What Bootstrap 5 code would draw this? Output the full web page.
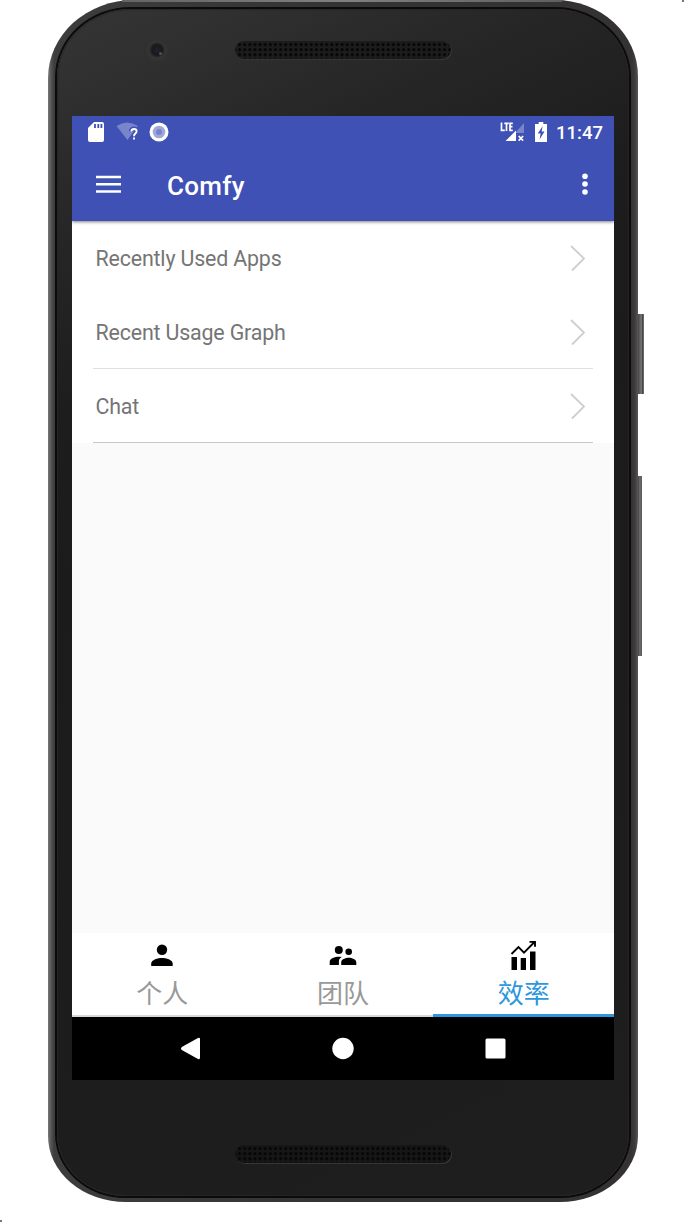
<!DOCTYPE html>
<html lang="zh-CN">
<head>
<meta charset="utf-8">
<meta name="viewport" content="width=device-width, initial-scale=1">
<title>Comfy</title>
<link href="https://cdn.jsdelivr.net/npm/bootstrap@5.3.0/dist/css/bootstrap.min.css" rel="stylesheet">
<style>
body{font-family:Roboto,"Noto Sans CJK SC",sans-serif;width:684px;height:1222px;overflow:hidden;background:#fff}
svg{display:block;flex:none}
.phone{width:590px;height:1202px;margin-left:48px;padding:9px 9px 6px 9px;border-radius:86px 83px 78px 78px/78px 76px 66px 66px;background:linear-gradient(90deg,#777 0,#555 3px,#3e3d3e 6px,#343233 50%,#343233 583px,#3e3b3c 587px,#5a5758 590px)}
.phone::before{content:"";position:absolute;left:122px;top:0;width:440px;height:2px;background:linear-gradient(90deg,#646464,#808080 50%,#606060)}
.face{width:572px;height:1187px;border-radius:74px 74px 68px 68px/68px 68px 62px 62px;padding:0 15px;background:linear-gradient(155deg,#353536 0,#2f2f2f 7%,#262626 16%,#1d1d1d 28%,#1b1b1b 40%,#1e1e1e 100%);box-shadow:0 0 0 2px #0b0b0b,inset 0 0 1px 1px #262626}
.brow{height:107px;padding-left:74px}
.lens{width:22px;height:22px;background:radial-gradient(circle at 11px 10px,#242129 0,#19181d 5px,#2a2a2a 7px,#353535 8px,#313131 11px);margin-top:31px}
.lens i{display:block;width:3px;height:3px;background:#654c4e;border-radius:50%;margin:12px 0 0 13px}
.grille{width:216px;height:18px;border-radius:9px;background:radial-gradient(circle,#050505 1.1px,transparent 1.9px) 2px 1px/5.13px 5.1px,#1c1c1c;box-shadow:1px 1px 0 #363636}
.brow .grille{margin:32px 0 0 67px}
.chin{height:116px}
.chin .grille{margin:65px 0 0 163px;background-color:#161616}
.sidekey{position:absolute;left:638px;background:linear-gradient(90deg,#444,#777 55%,#484848 75%,#777)}
.key-power{top:314px;width:6px;height:80px}
.key-volume{top:476px;width:4px;height:180px}
.fleck{position:absolute;width:2px;height:2px;background:#777}
.screen{width:542px;height:964px;background:#fafafa}
.topbars{height:105px;background:#3f51b5;color:#fff;box-shadow:0 1px 3px rgba(0,0,0,.5);clip-path:inset(0 0 -6px 0);position:relative}
.status{height:32px;padding:0 11px 0 16px}
.clock{font-size:18.500px;font-weight:500;line-height:32px;margin:1px 0 0 9px}
.appbar{height:73px;padding:0 25px 2px 24px}
.apptitle{font-size:26px;font-weight:500;line-height:1;margin:4px 0 0 46px;letter-spacing:.3px}
.entry{height:74px;padding:0 28px 0 24px;color:#757575;font-size:21.400px;background:#fff}
.entry .label{margin-top:3px;margin-left:-.5px;letter-spacing:-.17px}
.rule{position:relative}
.rule::after{content:"";position:absolute;left:21px;right:21px;bottom:0;height:1px;background:#e0e0e0}
.rule-end::after{background:#c8c8c8}
.tabs{height:84px;background:#fff}
.tab{color:#999;font-size:26px;border-bottom:2px solid #d8d8d8;padding-top:8px;font-family:"Noto Sans CJK SC",sans-serif;font-weight:400}
.tab span{line-height:36px;margin-top:1px}
.tab.on{color:#2c97de;border-bottom:3px solid #2c97de}
.softkeys{height:63px;background:#000}
</style>
</head>
<body>
<div class="phone">
 <div class="face">
  <div class="brow d-flex align-items-start"><div class="lens rounded-circle d-flex align-items-start"><i></i></div><div class="grille"></div></div>
  <main class="screen d-flex flex-column">
   <header class="topbars">
    <div class="status d-flex align-items-center">
     <svg width="16" height="20" viewBox="0 0 16 20"><path fill="#fff" d="M6 0h8q2 0 2 2v16q0 2-2 2H2q-2 0-2-2V6z"/><path d="M7 2v4M10.300 2v4M13.400 2v4" stroke="#3f51b5" stroke-width="1.800"/></svg>
     <svg class="ms-2" width="32" height="22" viewBox="0 0 32 22" style="margin-right:2px"><path fill="#7985cb" d="M4.500 5Q15 -2 26 5l-4 5-6.500 9z"/><path d="M18.800 10.500q.3-3 3.100-3 3 0 3 2.700 0 1.600-1.500 2.600-1.400 1-1.400 2.700" fill="none" stroke="#3f51b5" stroke-width="4"/><path d="M19.300 10.500q.2-2.500 2.700-2.500 2.600 0 2.600 2.300 0 1.300-1.300 2.300-1.300.9-1.300 2.600M22 16.500v2" fill="none" stroke="#fff" stroke-width="1.900"/></svg>
     <svg width="20" height="20" viewBox="0 0 20 20" style="margin-left:3px"><circle cx="10" cy="10" r="9.500" fill="#fff"/><circle cx="10" cy="10" r="6.300" fill="#9fa8da"/><circle cx="10" cy="10" r="3" fill="#7985cb"/></svg>
     <svg class="ms-auto" width="25" height="22" viewBox="0 0 25 22"><path fill="#7985cb" d="M24 2v10h-9z"/><path fill="#fff" d="M5.500 20 16 9.500V20z"/><path d="M1.500 1.500v7.800H4.800M4.300 2.300h4.400M6.500 2v8M12.800 2.300H10v7h2.800M10 5.700h2.500" fill="none" stroke="#fff" stroke-width="1.700"/><path fill="#3f51b5" d="M16 13h8v7h-8z"/><path d="m18.700 15 4.400 4.600m0-4.600-4.400 4.600" stroke="#fff" stroke-width="1.700"/></svg>
     <svg width="12" height="20" viewBox="0 0 13 20" preserveAspectRatio="none" style="margin-left:10px"><path fill="#fff" d="M4 0h5v2h4v18H0V2h4z"/><path d="M8.300 4 3 11.500h3.100L5 17.500 10.300 9.500H7.200z" fill="#3f51b5"/></svg>
     <span class="clock">11:47</span>
    </div>
    <div class="appbar d-flex align-items-center">
     <svg width="25" height="18" viewBox="0 0 25 18"><path d="M0 2h25M0 9.300h25M0 16.500h25" stroke="#fff" stroke-width="2.500"/></svg>
     <span class="apptitle">Comfy</span>
     <svg class="ms-auto" width="8" height="22" viewBox="0 0 8 22"><g fill="#fff"><circle cx="4" cy="3.200" r="2.800"/><circle cx="4" cy="11" r="2.800"/><circle cx="4" cy="19" r="2.800"/></g></svg>
    </div>
   </header>
   <section class="flex-grow-1">
    <div class="entry d-flex align-items-center justify-content-between"><span class="label">Recently Used Apps</span><svg width="16" height="28" viewBox="0 0 16 28"><path d="m1 2 13 12.500-12 12" fill="none" stroke="#cecece" stroke-width="1.800"/></svg></div>
    <div class="entry rule d-flex align-items-center justify-content-between"><span class="label">Recent Usage Graph</span><svg width="16" height="28" viewBox="0 0 16 28"><path d="m1 2 13 12.500-12 12" fill="none" stroke="#cecece" stroke-width="1.800"/></svg></div>
    <div class="entry rule rule-end d-flex align-items-center justify-content-between"><span class="label">Chat</span><svg width="16" height="28" viewBox="0 0 16 28"><path d="m1 2 13 12.500-12 12" fill="none" stroke="#cecece" stroke-width="1.800"/></svg></div>
   </section>
   <nav class="tabs row g-0">
    <div class="tab col h-100 d-flex flex-column align-items-center"><svg width="32" height="32" viewBox="0 0 32 32"><ellipse cx="16" cy="8.800" rx="5.200" ry="5.300"/><path d="M5.200 25v-2.500C5.200 18.800 12 17 16 17s10.700 1.800 10.700 5.500V25z"/></svg><span>个人</span></div>
    <div class="tab col h-100 d-flex flex-column align-items-center"><svg width="32" height="32" viewBox="0 0 32 32"><circle cx="11.800" cy="9" r="4"/><circle cx="21.700" cy="10.800" r="3.300"/><path d="M2.700 24v-3.300c0-3.500 5.300-5 9-5 1 0 2 .1 3 .3-2 1.300-2.800 2.700-2.800 4.700V24zM14.200 24v-2.700c0-3 4.300-4.600 7.500-4.600s7.600 1.600 7.600 4.600V24z"/></svg><span>团队</span></div>
    <div class="tab on col h-100 d-flex flex-column align-items-center"><svg width="32" height="32" viewBox="0 0 32 32"><path d="M3.500 16h5.500v13H3.500zM12.700 17h5.300v12h-5.300zM22 10.500h5.500V29H22z"/><path d="m3.500 13 7-7 5.500 5.600L26.500 1M21.500.8h5.500v5" fill="none" stroke="#000" stroke-width="1.900"/></svg><span>效率</span></div>
   </nav>
   <div class="softkeys d-flex align-items-center">
    <svg width="542" height="63" viewBox="0 0 542 63"><g fill="#fff"><path d="M109.800 30 126 20.900q2-.8 2 1.200v18.700q0 2-2 1.200L109.800 33q-1.800-1.500 0-3z"/><circle cx="271" cy="31.500" r="10.700"/><rect x="413.500" y="21.500" width="20" height="20" rx="1.500"/></g></svg>
   </div>
  </main>
  <div class="chin d-flex align-items-start"><div class="grille"></div></div>
 </div>
</div>
<div class="sidekey key-power"></div>
<div class="sidekey key-volume"></div>
<div class="fleck" style="left:682px;top:0"></div>
<div class="fleck" style="left:0;top:1220px"></div>
<script src="https://cdn.jsdelivr.net/npm/bootstrap@5.3.0/dist/js/bootstrap.bundle.min.js"></script>
</body>
</html>
